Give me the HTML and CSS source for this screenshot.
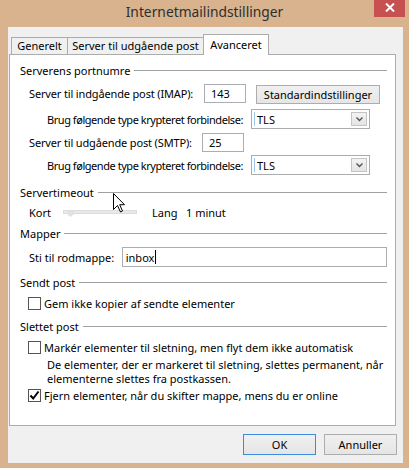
FILE: index.html
```html
<!DOCTYPE html>
<html lang="da">
<head>
<meta charset="utf-8">
<title>Internetmailindstillinger</title>
<link rel="stylesheet" href="styles.css">
</head>
<body>
<div class="window">
  <div class="titlebar">
    <span class="tb-spacer"></span>
    <div class="title">Internetmailindstillinger</div>
    <div class="close">
      <svg width="10" height="9" viewBox="0 0 10 9"><path d="M1 0.5 L9 8.5 M9 0.5 L1 8.5" stroke="#fff" stroke-width="2"/></svg>
    </div>
  </div>
  <div class="client">
    <div class="tabs">
      <div class="tab tab-gen">Generelt</div>
      <div class="tab tab-srv">Server til udgående post</div>
      <div class="tab tab-adv active">Avanceret</div>
    </div>
    <div class="panel">
      <div class="group-head gh-1"><span>Serverens portnumre</span><i class="rule"></i></div>
      <div class="row row-imap">
        <span class="lbl lbl-imap">Server til indgående post (IMAP):</span>
        <div class="field num num-imap">143</div>
        <div class="btn btn-std">Standardindstillinger</div>
      </div>
      <div class="row row-enc1">
        <span class="lbl lbl-enc">Brug følgende type krypteret forbindelse:</span>
        <div class="select"><span class="caret"></span><span class="sel-text">TLS</span><span class="sel-btn"><svg width="7" height="5" viewBox="0 0 7 5"><path d="M0.5 0.5 L3.5 3.5 L6.5 0.5" fill="none" stroke="#4a5560" stroke-width="1.4"/></svg></span></div>
      </div>
      <div class="row row-smtp">
        <span class="lbl lbl-smtp">Server til udgående post (SMTP):</span>
        <div class="field num num-smtp">25</div>
      </div>
      <div class="row row-enc2">
        <span class="lbl lbl-enc">Brug følgende type krypteret forbindelse:</span>
        <div class="select"><span class="caret"></span><span class="sel-text">TLS</span><span class="sel-btn"><svg width="7" height="5" viewBox="0 0 7 5"><path d="M0.5 0.5 L3.5 3.5 L6.5 0.5" fill="none" stroke="#4a5560" stroke-width="1.4"/></svg></span></div>
      </div>
      <div class="group-head gh-2"><span>Servertimeout</span><i class="rule"></i></div>
      <div class="row row-timeout">
        <span class="lbl lbl-kort">Kort</span>
        <div class="slider"><span class="thumb"></span></div>
        <span class="lbl lbl-lang">Lang</span>
        <span class="lbl">1 minut</span>
      </div>
      <div class="group-head gh-3"><span>Mapper</span><i class="rule"></i></div>
      <div class="row row-path">
        <span class="lbl lbl-path">Sti til rodmappe:</span>
        <div class="field path">inbox<span class="text-caret"></span></div>
      </div>
      <div class="group-head gh-4"><span>Sendt post</span><i class="rule"></i></div>
      <div class="row cb-row cb-1">
        <span class="checkbox"></span>
        <span class="lbl">Gem ikke kopier af sendte elementer</span>
      </div>
      <div class="group-head gh-5"><span>Slettet post</span><i class="rule"></i></div>
      <div class="row cb-row cb-2">
        <span class="checkbox"></span>
        <span class="lbl">Markér elementer til sletning, men flyt dem ikke automatisk</span>
      </div>
      <div class="desc">
        <div class="desc-line">De elementer, der er markeret til sletning, slettes permanent, når</div>
        <div class="desc-line">elementerne slettes fra postkassen.</div>
      </div>
      <div class="row cb-row cb-3">
        <span class="checkbox checked"><svg width="11" height="11" viewBox="0 0 11 11"><path d="M1.5 5.5 L4.2 8.5 L9.5 1.5" fill="none" stroke="#000" stroke-width="2"/></svg></span>
        <span class="lbl">Fjern elementer, når du skifter mappe, mens du er online</span>
      </div>
    </div>
    <div class="footer">
      <div class="btn btn-dlg btn-ok">OK</div>
      <div class="btn btn-dlg">Annuller</div>
    </div>
  </div>
  <svg class="cursor" width="13" height="20" viewBox="0 0 13 20"><path d="M0.5 0.5 L0.5 16.5 L4.5 12.5 L7.5 19 L9.5 18 L6.7 11.7 L11.5 11.7 Z" fill="#fff" stroke="#000" stroke-width="1"/></svg>
</div>
</body>
</html>
```

FILE: styles.css
```css
html, body {
  margin: 0;
  padding: 0;
}
body {
  background: #d9b38e;
  font-family: "Noto Sans", "DejaVu Sans", sans-serif;
  font-size: 11px;
  color: #000;
}
.window {
  position: relative;
  width: 409px;
  height: 468px;
  overflow: hidden;
  display: flex;
  flex-direction: column;
}
.titlebar {
  height: 27px;
  display: grid;
  grid-template-columns: 1fr auto 1fr;
  align-items: start;
}
.title {
  font-size: 13.8px;
  line-height: 24px;
  color: #2e2e2e;
}
.close {
  justify-self: end;
  margin-right: 4px;
  width: 31px;
  height: 17px;
  background: #c75050;
  display: flex;
  align-items: center;
  justify-content: center;
  padding-bottom: 2px;
  box-sizing: border-box;
}
.close svg { display: block; }
.client {
  flex: 1;
  margin: 0 6px 5px 8px;
  background: #f0f0f0;
  padding: 7px 7px 0 1px;
  box-sizing: border-box;
  display: flex;
  flex-direction: column;
}
.tabs {
  display: flex;
  height: 20px;
  align-items: flex-end;
  padding-left: 2px;
  position: relative;
  z-index: 1;
}
.tab {
  height: 17px;
  box-sizing: border-box;
  border: 1px solid #acacac;
  border-bottom: none;
  background: #f0f0f0;
  display: flex;
  align-items: center;
  justify-content: center;
  white-space: nowrap;
  line-height: 14px;
}
.tab + .tab { margin-left: -1px; }
.tab-gen { width: 57px; }
.tab-srv { width: 137px; }
.tab-adv { width: 66px; }
.tab.active {
  height: 21px;
  margin-bottom: -1px;
  background: #fff;
}
.panel {
  height: 372px;
  box-sizing: border-box;
  border: 1px solid #acacac;
  background: #fff;
  padding: 0 8px 0 10px;
  display: flex;
  flex-direction: column;
}
.group-head {
  height: 16px;
  display: flex;
  align-items: center;
  white-space: nowrap;
}
.group-head .rule {
  flex: 1;
  height: 1px;
  background: #a0a0a0;
  margin-left: 4px;
}
.gh-1 { margin-top: 7px; }
.gh-2 { margin-top: 9px; }
.gh-3 { margin-top: 5px; }
.gh-4 { margin-top: 7px; }
.gh-5 { margin-top: 7px; }
.row {
  display: flex;
  align-items: center;
  white-space: nowrap;
  padding-left: 9px;
}
.row-imap { height: 19px; margin-top: 6px; }
.row-enc1 { height: 20px; margin-top: 6px; }
.row-smtp { height: 19px; margin-top: 4px; }
.row-enc2 { height: 20px; margin-top: 3px; }
.row-timeout { height: 16px; margin-top: 4px; }
.row-path { height: 20px; margin-top: 6px; }
.cb-1 { height: 16px; margin-top: 5px; padding-left: 8px; }
.cb-2 { height: 16px; margin-top: 5px; padding-left: 8px; }
.cb-3 { height: 16px; margin-top: 1px; padding-left: 8px; }
.lbl { display: inline-block; }
.lbl-imap { width: 175px; letter-spacing: -0.15px; }
.lbl-smtp { width: 173px; letter-spacing: -0.15px; }
.lbl-enc {
  width: 222px;
  padding-left: 18px;
  box-sizing: border-box;
  letter-spacing: -0.45px;
  overflow: hidden;
}
.lbl-kort { width: 34px; }
.lbl-lang { width: 34px; margin-left: 15px; }
.lbl-path { width: 93px; }
.field {
  height: 19px;
  box-sizing: border-box;
  border: 1px solid #abadb3;
  background: #fff;
  display: flex;
  align-items: center;
}
.num { width: 42px; }
.num-imap { padding-left: 6px; }
.num-smtp { padding-left: 6px; }
.path {
  width: 266px;
  height: 20px;
  padding-left: 3px;
}
.text-caret {
  display: inline-block;
  width: 1px;
  height: 14px;
  background: #000;
  margin-left: 1px;
}
.btn {
  box-sizing: border-box;
  border: 1px solid #adadad;
  background: linear-gradient(#f0f0f0, #e5e5e5);
  display: flex;
  align-items: center;
  justify-content: center;
}
.btn-std {
  width: 124px;
  height: 19px;
  margin-left: 10px;
  margin-top: 2px;
}
.select {
  width: 119px;
  height: 20px;
  box-sizing: border-box;
  border: 1px solid #acacac;
  background: #fff;
  display: flex;
  align-items: center;
  padding-left: 2px;
}
.caret {
  width: 1px;
  height: 14px;
  background: #9cc8ec;
  margin-right: 2px;
}
.sel-text { flex: 1; }
.sel-btn {
  width: 16px;
  height: 14px;
  box-sizing: border-box;
  border: 1px solid #c4c4c4;
  background: linear-gradient(#f3f3f3, #e4e4e4);
  margin-right: 2px;
  display: flex;
  align-items: center;
  justify-content: center;
}
.sel-btn svg { display: block; }
.slider {
  position: relative;
  width: 74px;
  height: 4px;
  box-sizing: border-box;
  border: 1px solid #dcdcdc;
  background: #e9e9e9;
}
.thumb {
  position: absolute;
  left: 3px;
  top: 0px;
  width: 7px;
  height: 6px;
  background: #e2e2e2;
  clip-path: polygon(0 0, 100% 0, 100% 55%, 50% 100%, 0 55%);
}
.checkbox {
  width: 13px;
  height: 13px;
  box-sizing: border-box;
  border: 1px solid #555;
  background: #fff;
  margin-right: 3px;
  display: flex;
  align-items: center;
  justify-content: center;
}
.checkbox svg { display: block; }
.desc {
  margin-top: 3px;
  padding-left: 27px;
  white-space: nowrap;
  display: flex;
  flex-direction: column;
}
.desc-line {
  height: 14px;
  line-height: 14px;
}
.footer {
  display: flex;
  justify-content: flex-end;
  gap: 8px;
  margin-top: 8px;
  margin-right: -1px;
}
.btn-dlg {
  width: 73px;
  height: 21px;
}
.btn-ok {
  border-color: #3c8be0;
}
.cursor {
  position: absolute;
  left: 113px;
  top: 193px;
}
```
